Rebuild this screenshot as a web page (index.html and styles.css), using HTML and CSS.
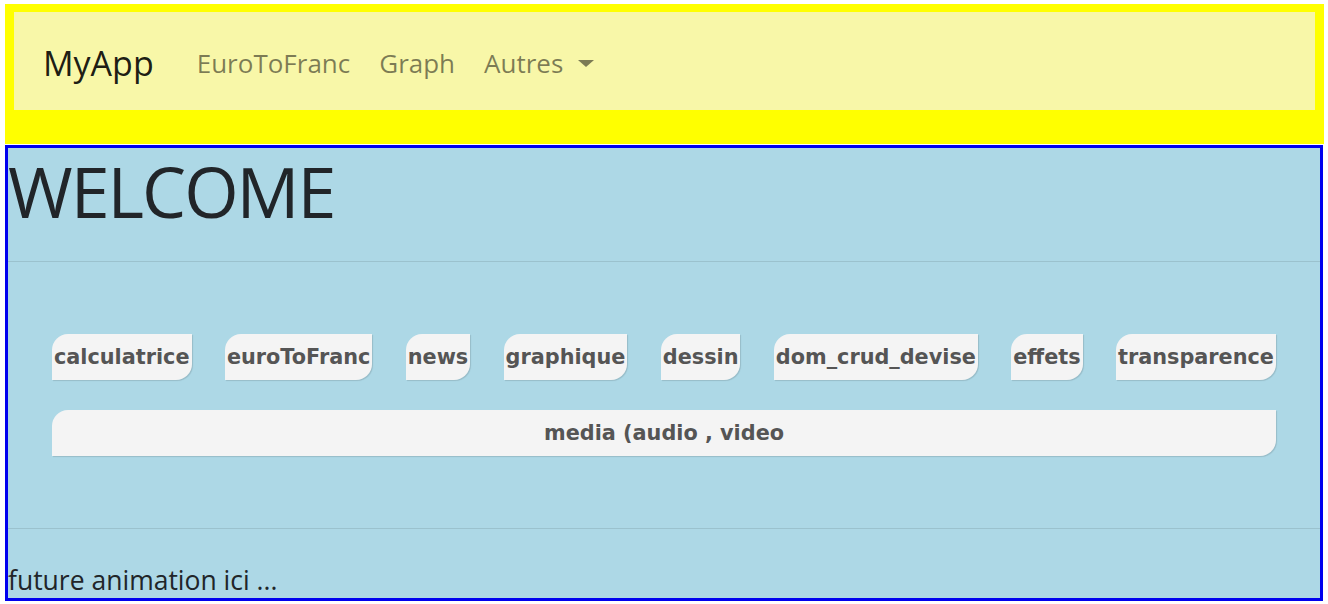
FILE: index.html
```html
<!DOCTYPE html>
<html lang="fr">
<head>
<meta charset="utf-8">
<title>MyApp</title>
<link rel="stylesheet" href="styles.css">
</head>
<body>
<header class="topbar">
  <nav class="navbar">
    <a class="brand" href="#">MyApp</a>
    <ul class="nav">
      <li><a class="nav-link" href="#">EuroToFranc</a></li>
      <li><a class="nav-link" href="#">Graph</a></li>
      <li><a class="nav-link dropdown" href="#">Autres</a></li>
    </ul>
  </nav>
</header>
<main class="panel">
  <h1 class="title">WELCOME</h1>
  <hr class="rule">
  <section class="apps">
    <div class="app-row">
      <button class="app">calculatrice</button>
      <button class="app">euroToFranc</button>
      <button class="app">news</button>
      <button class="app">graphique</button>
      <button class="app">dessin</button>
      <button class="app">dom_crud_devise</button>
      <button class="app">effets</button>
      <button class="app">transparence</button>
    </div>
    <button class="app app-wide">media (audio , video</button>
  </section>
  <hr class="rule">
  <p class="note">future animation ici ...</p>
</main>
</body>
</html>
```
FILE: styles.css
```css
html, body {
  margin: 0;
}
body {
  padding: 4px 4px 0 5px;
  background: #fff;
  font-family: "Open Sans", "Noto Sans", sans-serif;
  color: #212529;
}
.topbar {
  background: #ffff00;
  padding: 8px 9px 34px 9px;
}
.navbar {
  background: #f8f7a8;
  height: 98px;
  box-sizing: border-box;
  padding: 3px 29px 0 29px;
  display: flex;
  align-items: center;
}
.brand {
  font-size: 34px;
  color: rgba(0, 0, 0, 0.9);
  text-decoration: none;
  margin-right: 43px;
}
.nav {
  display: flex;
  align-items: center;
  gap: 29px;
  list-style: none;
  margin: 0;
  padding: 0;
}
.nav-link {
  font-size: 26px;
  color: rgba(0, 0, 0, 0.5);
  text-decoration: none;
}
.dropdown::after {
  content: "";
  display: inline-block;
  margin-left: 15px;
  vertical-align: 6px;
  border-top: 7px solid rgba(0, 0, 0, 0.5);
  border-left: 8px solid transparent;
  border-right: 8px solid transparent;
}
.panel {
  margin: 1px 1px 0 0;
  border: 3px solid #0000ee;
  background: #add8e6;
}
.title {
  margin: 0;
  font-size: 70px;
  letter-spacing: -2px;
  font-weight: 400;
  line-height: 86px;
  color: #212529;
}
.rule {
  margin: 27px 0 0 0;
  border: 0;
  border-top: 1px solid rgba(0, 0, 0, 0.1);
  height: 0;
}
.apps {
  padding: 72px 44px;
}
.app-row {
  display: flex;
  justify-content: space-between;
  margin-bottom: 30px;
}
.app {
  font-family: "DejaVu Sans", Verdana, sans-serif;
  font-weight: bold;
  font-size: 20.8px;
  color: #555;
  background: #f4f4f4;
  border: 0;
  border-radius: 16px 0 16px 0;
  height: 46px;
  padding: 0 2px;
  box-shadow: 1px 1px 1px rgba(0, 0, 0, 0.13);
}
.app-wide {
  display: block;
  width: 100%;
}
.apps + .rule {
  margin-top: 0;
}
.note {
  margin: 33px 0 0 0;
  font-size: 26.5px;
  line-height: 36px;
}
```
